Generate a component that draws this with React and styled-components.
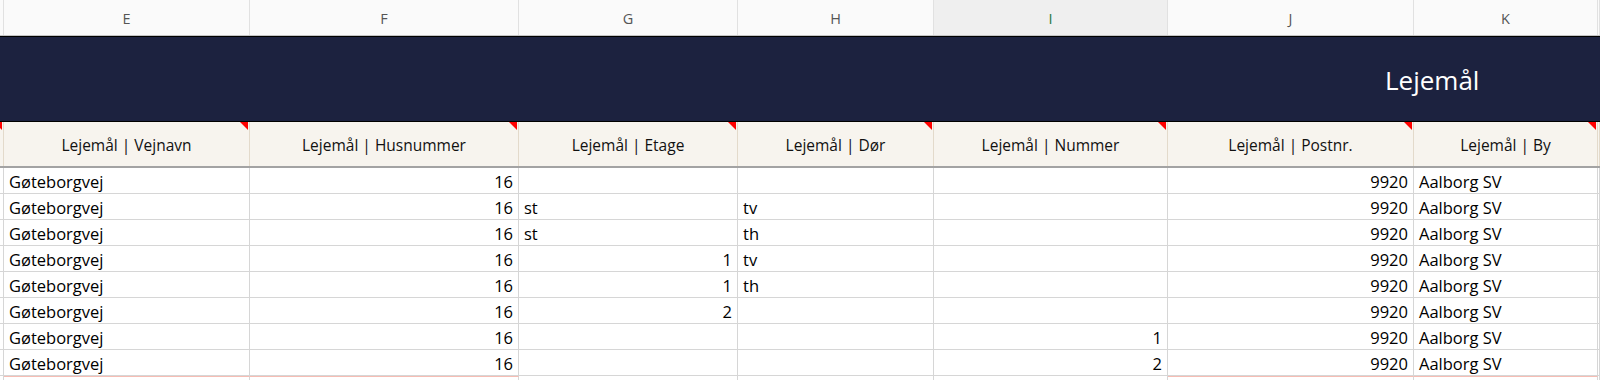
import React from "react";
import styled, { createGlobalStyle } from "styled-components";

const GlobalStyle = createGlobalStyle`
  html, body {
    margin: 0;
    padding: 0;
    background: #fff;
  }
  body {
    font-family: "Open Sans", "Noto Sans", sans-serif;
    overflow: hidden;
  }
`;

const COLS = "4px 246px 269px 219px 196px 234px 246px 184px 2px";

const Sheet = styled.div`
  width: 1600px;
  height: 380px;
  overflow: hidden;
  background: #fff;
`;

const LetterRow = styled.div`
  display: grid;
  grid-template-columns: ${COLS};
  height: 35px;
  border-bottom: 1px solid #c4c4c4;
  background: #fafafa;
`;

const Letter = styled.div`
  display: flex;
  align-items: center;
  justify-content: center;
  border-right: 1px solid #e1e1e1;
  background: ${(p) => (p.$active ? "#efefef" : "#fafafa")};
  color: ${(p) => (p.$active ? "#1f7a45" : "#555")};
  font-size: 14.5px;
  padding-top: 1px;
`;

const Banner = styled.div`
  height: 84px;
  border-top: 1px solid #000;
  border-bottom: 1px solid #000;
  background: #1c223f;
  display: flex;
  align-items: center;
  padding-left: 1385px;
`;

const BannerTitle = styled.span`
  color: #fff;
  font-size: 26px;
  font-weight: 500;
  padding-top: 2px;
`;

const HeadRow = styled.div`
  display: grid;
  grid-template-columns: ${COLS};
  height: 44px;
  border-bottom: 2px solid #a3a3a3;
  background: #f7f4ee;
`;

const HeadCell = styled.div`
  position: relative;
  display: flex;
  align-items: center;
  justify-content: center;
  border-right: 1px solid #e3dacb;
  color: #111;
  font-size: 15.5px;
  padding-top: 2px;
`;

const Flag = styled.span`
  position: absolute;
  top: 0;
  right: 1px;
  width: 0;
  height: 0;
  border-top: 8px solid #ff0000;
  border-left: 8px solid transparent;
`;

const Row = styled.div`
  display: grid;
  grid-template-columns: ${COLS};
  height: 26px;
`;

const Cell = styled.div`
  display: flex;
  align-items: center;
  justify-content: ${(p) => (p.$num ? "flex-end" : "flex-start")};
  padding: ${(p) => (p.$edge ? "0" : "2px 5px 0 5px")};
  border-right: 1px solid #d6d6d6;
  border-bottom: 1px solid #d6d6d6;
  border-top: ${(p) => (p.$pink ? "1px solid #f6bdb4" : "none")};
  color: #000;
  font-size: 16.5px;
  white-space: nowrap;
  overflow: hidden;
`;

const letters = ["", "E", "F", "G", "H", "I", "J", "K", ""];
const heads = [
  "Lejemål | Vejnavn",
  "Lejemål | Husnummer",
  "Lejemål | Etage",
  "Lejemål | Dør",
  "Lejemål | Nummer",
  "Lejemål | Postnr.",
  "Lejemål | By",
];

// [etage, etageIsNumber, dør, nummer]
const rows = [
  ["", false, "", ""],
  ["st", false, "tv", ""],
  ["st", false, "th", ""],
  ["1", true, "tv", ""],
  ["1", true, "th", ""],
  ["2", true, "", ""],
  ["", false, "", "1"],
  ["", false, "", "2"],
];

function DataRow({ r }) {
  const [etage, etageNum, door, nr] = r;
  return (
    <Row>
      <Cell $edge />
      <Cell>Gøteborgvej</Cell>
      <Cell $num>16</Cell>
      <Cell $num={etageNum}>{etage}</Cell>
      <Cell>{door}</Cell>
      <Cell $num>{nr}</Cell>
      <Cell $num>9920</Cell>
      <Cell>Aalborg SV</Cell>
      <Cell $edge />
    </Row>
  );
}

export default function App() {
  return (
    <Sheet>
      <GlobalStyle />
      <LetterRow>
        {letters.map((l, i) => (
          <Letter key={i} $active={l === "I"}>
            {l}
          </Letter>
        ))}
      </LetterRow>
      <Banner>
        <BannerTitle>Lejemål</BannerTitle>
      </Banner>
      <HeadRow>
        <HeadCell>
          <Flag />
        </HeadCell>
        {heads.map((h) => (
          <HeadCell key={h}>
            {h}
            <Flag />
          </HeadCell>
        ))}
        <HeadCell />
      </HeadRow>
      {rows.map((r, i) => (
        <DataRow key={i} r={r} />
      ))}
      <Row>
        <Cell $edge />
        <Cell $pink />
        <Cell $pink />
        <Cell />
        <Cell />
        <Cell />
        <Cell $pink />
        <Cell $pink />
        <Cell $edge />
      </Row>
    </Sheet>
  );
}
